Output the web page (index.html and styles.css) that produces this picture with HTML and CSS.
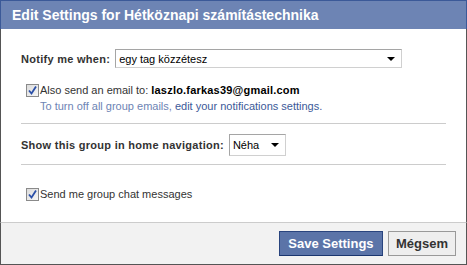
FILE: index.html
```html
<!DOCTYPE html>
<html>
<head>
<meta charset="utf-8">
<link rel="stylesheet" href="styles.css">
</head>
<body>
<div class="dialog">
  <div class="title">Edit Settings for Hétköznapi számítástechnika</div>
  <div class="content">
    <div class="field-row notify">
      <span class="label">Notify me when:</span>
      <div class="select wide"><span>egy tag közzétesz</span><span class="arrow"></span></div>
    </div>
    <div class="check-row email">
      <span class="checkbox"><svg viewBox="0 0 13 13" width="13" height="13"><path d="M3 6.5 L5.5 9.5 L10 2.5" fill="none" stroke="#2a4fa8" stroke-width="1.8"/></svg></span>
      <div class="check-text">
        <div>Also send an email to: <b>laszlo.farkas39@gmail.com</b></div>
        <div class="hint">To turn off all group emails, <span class="link">edit your notifications settings.</span></div>
      </div>
    </div>
    <div class="sep"></div>
    <div class="field-row nav">
      <span class="label">Show this group in home navigation:</span>
      <div class="select small"><span>Néha</span><span class="arrow"></span></div>
    </div>
    <div class="sep"></div>
    <div class="check-row chat">
      <span class="checkbox"><svg viewBox="0 0 13 13" width="13" height="13"><path d="M3 6.5 L5.5 9.5 L10 2.5" fill="none" stroke="#2a4fa8" stroke-width="1.8"/></svg></span>
      <div class="check-text"><div>Send me group chat messages</div></div>
    </div>
  </div>
  <div class="footer">
    <button class="btn primary">Save Settings</button>
    <button class="btn">Mégsem</button>
  </div>
</div>
</body>
</html>
```
FILE: styles.css
```css
html, body {
  margin: 0;
  padding: 0;
  background: #fff;
}
.dialog {
  width: 467px;
  height: 265px;
  box-sizing: border-box;
  display: flex;
  flex-direction: column;
  font-family: "Liberation Sans", Arial, sans-serif;
  font-size: 11px;
  color: #333;
}
.title {
  height: 29px;
  box-sizing: border-box;
  border: 1px solid #3b5998;
  border-bottom: none;
  background: #6d84b4;
  color: #fff;
  font-weight: bold;
  font-size: 14px;
  line-height: 28px;
  padding-left: 11px;
}
.content {
  flex: 1;
  border-left: 1px solid #555;
  border-right: 1px solid #555;
  padding: 20px 20px 0 20px;
}
.field-row {
  display: flex;
  align-items: center;
  gap: 5px;
}
.label {
  font-weight: bold;
  color: #333;
  letter-spacing: 0.28px;
}
.select {
  box-sizing: border-box;
  height: 19px;
  border: 1px solid #bdc7d8;
  border-color: #a5a5a5 #d0d0d0 #d0d0d0 #a5a5a5;
  display: flex;
  align-items: center;
  justify-content: space-between;
  padding: 0 6px 0 3px;
  color: #000;
  background: #fff;
}
.select.wide { width: 287px; }
.select.small { width: 57px; height: 22px; }
.arrow {
  width: 0;
  height: 0;
  border-left: 4px solid transparent;
  border-right: 4px solid transparent;
  border-top: 4px solid #000;
}
.check-row {
  display: flex;
  align-items: flex-start;
  padding-left: 5px;
}
.email { margin-top: 14px; }
.checkbox {
  width: 13px;
  height: 13px;
  box-sizing: border-box;
  border: 1px solid #8a8a8a;
  background: linear-gradient(135deg, #dcdcdc, #f6f6f6);
  margin-right: 1px;
  margin-top: 2px;
  display: flex;
}
.checkbox svg { display: block; margin: -1px; }
.check-text {
  line-height: 16px;
  color: #333;
}
.check-text b { color: #000; letter-spacing: 0.2px; }
.hint { color: #6d84b4; }
.link { color: #3b5998; }
.sep {
  height: 1px;
  background: #ccc;
  margin: 9px 0 0 0;
}
.nav { margin-top: 10px; }
.nav + .sep { margin-top: 8px; }
.chat { margin-top: 21px; }
.footer {
  height: 43px;
  box-sizing: border-box;
  border-top: 1px solid #ccc;
  border-left: 1px solid #555;
  border-right: 1px solid #555;
  border-bottom: 1px solid #555;
  background: #f2f2f2;
  display: flex;
  justify-content: flex-end;
  align-items: flex-start;
  gap: 5px;
  padding: 8px 10px 0 0;
}
.btn {
  font-family: "Liberation Sans", Arial, sans-serif;
  font-size: 13px;
  font-weight: bold;
  height: 25px;
  box-sizing: border-box;
  padding: 0 7px;
  border: 1px solid #999;
  background: #eee;
  color: #333;
  margin: 0;
}
.btn.primary {
  background: #5b74a8;
  border-color: #29447e #29447e #1a356e;
  color: #fff;
  width: 104px;
}
```
